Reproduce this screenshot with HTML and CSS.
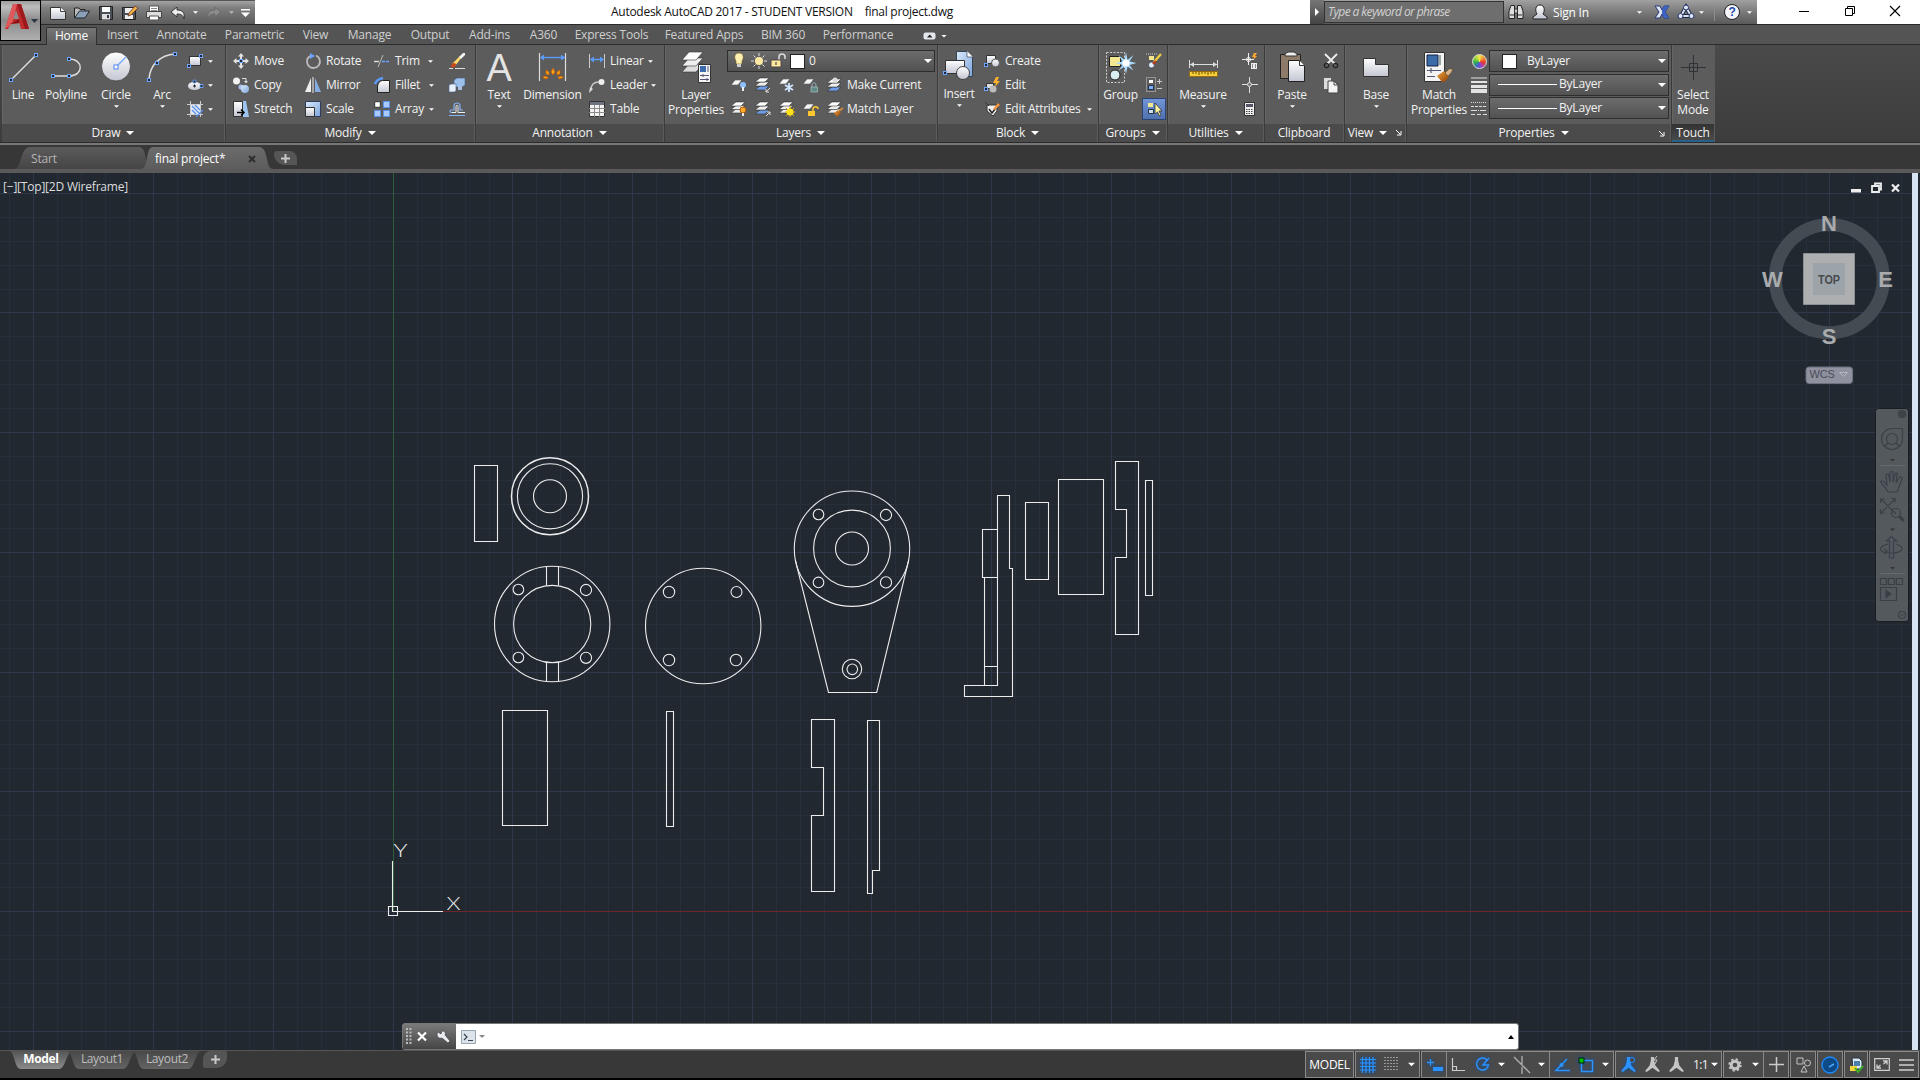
FILE: index.html
```html
<!DOCTYPE html>
<html lang="en">
<head>
<meta charset="utf-8">
<title>Autodesk AutoCAD 2017</title>
<link rel="stylesheet" href="styles.css">
</head>
<body>
<svg class="defs" width="0" height="0">
  <defs>
    <linearGradient id="w" x1="0" y1="0" x2="0" y2="1"><stop offset="0" stop-color="#fff"/><stop offset="1" stop-color="#c3c6d2"/></linearGradient>
    <linearGradient id="b" x1="0" y1="0" x2="1" y2="1"><stop offset="0" stop-color="#dcebfb"/><stop offset="1" stop-color="#7ba4dc"/></linearGradient>
    <linearGradient id="o" x1="0" y1="0" x2="1" y2="1"><stop offset="0" stop-color="#f2a53c"/><stop offset="1" stop-color="#8c3d06"/></linearGradient>
    <symbol id="dn" viewBox="0 0 8 4"><path d="M0 0h8L4 4z" fill="#fff"/></symbol>
    <symbol id="node" viewBox="0 0 4 4"><rect x=".5" y=".5" width="3" height="3" fill="#223" stroke="#6ea6ff"/></symbol>
    <symbol id="sheet" viewBox="0 0 11 5"><path d="M4 0h7L7 5H0z" fill="#f6f6f6" stroke="#333" stroke-width=".5"/></symbol>
    <symbol id="stack" viewBox="0 0 16 16"><g stroke="#333" stroke-width=".6"><path d="M5 8h9l-4 4H0z" fill="#eee"/><path d="M5 4.500h9l-4 4H0z" fill="#eee"/><path d="M5 1h9l-4 4H0z" fill="#fff"/></g></symbol>
    <symbol id="stackb" viewBox="0 0 16 16"><g stroke="#333" stroke-width=".6"><path d="M5 9h9l-4 4H0z" fill="#6d9de6"/><path d="M5 5h9l-4 4H0z" fill="#eee"/><path d="M5 1h9l-4 4H0z" fill="#fff"/></g></symbol>
    <symbol id="person" viewBox="0 0 16 16"><path d="M5 10c-2-3-2-9 3-9s5 6 3 9l4 3v2H1v-2z" fill="url(#w)" stroke="#222"/></symbol>
    <symbol id="compass" viewBox="0 0 16 16"><path d="M6.500 1h3v3l1.200 5L15 14l-1.500 1L8 11l-5.500 4L1 14l4.300-5L6.500 4z"/></symbol>
  </defs>
</svg>

<div class="app">
  <header class="titlebar">
    <div class="quick">
      <svg width="16" height="16" style="margin-left:9px"><path d="M.5 2.500h10l5 4v8H.500z" fill="url(#w)" stroke="#333"/><path d="M10.500 2.500v4h5" fill="#fff" stroke="#444"/></svg>
      <svg width="16" height="16"><path d="M.5 13V3h4.500l1 1.500h5V8" fill="#bbb" stroke="#222"/><path d="M.5 13l5-7h10l-4.500 7z" fill="#8aa0b8" stroke="#20262e"/></svg>
      <svg width="16" height="16"><path d="M1.500 1.500h13v13h-13z" fill="#4a5058" stroke="#222"/><path d="M4 2h8v5H4z" fill="#fff"/><path d="M4 9h8v5.500H4z" fill="#ddd"/><path d="M9 10h2v3H9z" fill="#334"/></svg>
      <svg width="16" height="16"><path d="M.5 2.500h13v12H.500z" fill="#4a5058" stroke="#222"/><path d="M3 3h8v5H3zM3 10h8v4H3z" fill="#eee"/><path d="M6 11l1-3 6-7 3 2-7 7z" fill="#f0b040" stroke="#633" stroke-width=".8"/></svg>
      <svg width="16" height="16"><path d="M3.500 1h9v6h-9z" fill="#fff" stroke="#555"/><path d="M.5 6.500h15v6H.500z" fill="#ddd" stroke="#444"/><path d="M3.500 11h9v4h-9z" fill="#fff" stroke="#555"/><path d="M5 3.500h6M5 5.500h6" stroke="#888"/></svg>
      <svg width="16" height="16"><path d="M1 7l6-5v3c6 0 8 3 7 9-1-4-3-5-7-5v3z" fill="#eee" stroke="#333"/></svg>
      <svg class="dn5" style="margin-left:-1px"><use href="#dn"/></svg>
      <svg width="16" height="16"><path d="M15 7L9 2v3C3 5 1 8 2 14c1-4 3-5 7-5v3z" fill="#8b8b8b" stroke="#6a6a6a"/></svg>
      <svg class="dn5" style="opacity:.5;margin-left:-1px"><use href="#dn"/></svg>
      <svg width="9" height="8" style="margin-left:-1px"><path d="M0 0h9v1.500H0zM0 3.500h9L4.500 8z" fill="#fff"/></svg>
    </div>
    <div class="apptitle"><span>Autodesk AutoCAD 2017 - STUDENT VERSION</span><span>final project.dwg</span></div>
    <div class="info">
      <div class="play"><svg width="4" height="8"><path d="M0 0l4 4-4 4z" fill="#fff"/></svg></div>
      <div class="search">Type a keyword or phrase</div>
      <svg width="16" height="16" style="margin-left:4px"><path d="M3 1.500h3.500V14.500H1V7zM9.500 1.500H13L15 7v7.500H9.500z" fill="#ddd" stroke="#222"/><path d="M6.500 5h3v4h-3zM2 11h4M10 11h4" fill="#ccc" stroke="#333"/></svg>
      <svg width="16" height="16" style="margin-left:8px"><use href="#person"/></svg>
      <span class="signin">Sign In</span>
      <svg class="dn5"><use href="#dn"/></svg>
      <svg width="16" height="14" style="margin-left:12px"><path d="M1 1h5l2 4 2-4h5l-4 6 4 6h-5L8 9l-2 4H1l4-6z" fill="#dfe6f5" stroke="#24366e"/><path d="M10 1h5l-4 6 4 6h-5L8 9V5z" fill="#3d62c4"/></svg>
      <svg width="18" height="16" style="margin-left:7px"><path d="M9 3L4 12h10z" fill="none" stroke="#1f2a4a" stroke-width="4"/><path d="M9 3L4 12h10z" fill="none" stroke="#d6deef" stroke-width="2"/><circle cx="9" cy="3.500" r="2.500" fill="#dfe6f5" stroke="#24366e"/><circle cx="3.500" cy="12" r="2.500" fill="#dfe6f5" stroke="#24366e"/><circle cx="14.500" cy="12" r="2.500" fill="#dfe6f5" stroke="#24366e"/></svg>
      <svg class="dn5" style="margin-left:4px"><use href="#dn"/></svg>
      <i class="sep"></i>
      <span class="help">?</span>
      <svg class="dn5" style="margin-left:7px"><use href="#dn"/></svg>
    </div>
    <div class="winctl">
      <svg width="12" height="12"><path d="M1 6.500h10" stroke="#000"/></svg>
      <svg width="12" height="12"><path d="M1.500 3.500h7v7h-7zM3.500 3.500v-2h7v7h-2" fill="none" stroke="#000"/></svg>
      <svg width="12" height="12"><path d="M1 1l10 10M11 1L1 11" stroke="#000" stroke-width="1.200"/></svg>
    </div>
    <div class="appbtn">
      <svg width="38" height="38"><path d="M4 28L12 3h8l8 25h-8l-1.500-6-9 1L7 28z" fill="#c22a2c"/><path d="M12 3h4l-5 20-7 5z" fill="#e0595a"/><path d="M15 9l3 9h-6z" fill="#8c8c8e"/><path d="M9 23l9-5 .500 4z" fill="#8d1216"/><path d="M20 3l8 25h-4L16 3z" fill="#9c1a1d"/><path d="M30 18h7l-3.500 4z" fill="#2a3644"/></svg>
    </div>
  </header>

  <nav class="tabs">
    <span class="on" style="width:51px">Home</span><span style="width:49px">Insert</span><span style="width:69px">Annotate</span><span style="width:77px">Parametric</span><span style="width:45px">View</span><span style="width:63px">Manage</span><span style="width:58px">Output</span><span style="width:61px">Add-ins</span><span style="width:47px">A360</span><span style="width:89px">Express Tools</span><span style="width:96px">Featured Apps</span><span style="width:62px">BIM 360</span><span style="width:88px">Performance</span>
    <svg class="cyc" width="24" height="8"><rect x=".5" y=".500" width="12" height="7" rx="2" fill="#e4e6ee"/><path d="M4 5.500h5.500L6.700 2.500z" fill="#222"/><path d="M18.500 3h5L21 5.500z" fill="#fff"/></svg>
  </nav>

  <section class="ribbon">
    <div class="panel" style="width:224px">
      <div class="body" style="grid-template-columns:42px 44px 56px 36px 32px">
        <div class="big"><svg viewBox="0 0 32 32"><path d="M4.500 28.500L29.500 3.500" stroke="#e6e6e6" stroke-width="1.300"/><use href="#node" x="2" y="27" width="4" height="4"/><use href="#node" x="27" y="2" width="4" height="4"/></svg><b>Line</b></div>
        <div class="big"><svg viewBox="0 0 32 32"><path d="M3 25h16c15 0 15-17 0-17" fill="none" stroke="#ddd" stroke-width="1.400"/><use href="#node" x="1" y="23" width="4" height="4"/><use href="#node" x="17" y="23" width="4" height="4"/><use href="#node" x="17" y="6" width="4" height="4"/></svg><b>Polyline</b></div>
        <div class="big"><svg viewBox="0 0 32 32"><circle cx="16" cy="15.500" r="14.500" fill="url(#w)" stroke="#333" stroke-width=".7"/><path d="M16 16L26 6" stroke="#6ea6ff" stroke-width="1.300"/><rect x="14" y="14" width="4" height="4" fill="#fff" stroke="#4a86f0"/></svg><b>Circle</b><svg class="dn5"><use href="#dn"/></svg></div>
        <div class="big"><svg viewBox="0 0 32 32"><path d="M3 28C4 14 14 4 29 3" fill="none" stroke="#ddd" stroke-width="1.500"/><use href="#node" x="1" y="27" width="4" height="4"/><use href="#node" x="9" y="10" width="4" height="4"/><use href="#node" x="27" y="1" width="4" height="4"/></svg><b>Arc</b><svg class="dn5"><use href="#dn"/></svg></div>
        <div class="col" style="padding-left:3px">
          <div class="it"><svg class="ic"><rect x="2.500" y="3.500" width="11" height="9" fill="url(#w)" stroke="#333"/><use href="#node" x="0" y="11" width="4" height="4"/><use href="#node" x="12" y="1" width="4" height="4"/></svg><svg class="dn5"><use href="#dn"/></svg></div>
          <div class="it"><svg class="ic"><ellipse cx="7.500" cy="9" rx="7" ry="4.500" fill="url(#w)" stroke="#333" stroke-width=".6"/><path d="M7.500 7.500v3M6 9h3" stroke="#222"/><use href="#node" x="5.500" y="2.500" width="4" height="4"/><use href="#node" x="12.500" y="7" width="4" height="4"/></svg><svg class="dn5"><use href="#dn"/></svg></div>
          <div class="it"><svg class="ic"><path d="M0 3.500h16M3.500 0v16M13.500 0v16M0 13.500h16" stroke="#ccc"/><rect x="4" y="4" width="9" height="9" fill="#dfe8f6"/><path d="M5 5l7 7M5 9l4 4M8 4l5 5M16 9L9 16" stroke="#5a8ee8" stroke-width="1.200"/></svg><svg class="dn5"><use href="#dn"/></svg></div>
        </div>
      </div>
      <div class="ttl">Draw<svg class="dn8"><use href="#dn"/></svg></div>
    </div>

    <div class="panel" style="width:250px">
      <div class="body" style="grid-template-columns:72px 69px 75px 28px;padding-left:3px">
        <div class="col">
          <div class="it"><svg class="ic"><path d="M8 0l3 3.500H9V6H7V3.500H5zM8 16l3-3.500H9V10H7v2.500H5zM0 8l3.500-3v2H6v2H3.500v2zM16 8l-3.500-3v2H10v2h2.500v2z" fill="#e2e2e2"/><use href="#node" x="6" y="6" width="4" height="4"/></svg>Move</div>
          <div class="it"><svg class="ic"><circle cx="3.500" cy="4" r="3.500" fill="#f2f2f2"/><circle cx="8" cy="10" r="2.500" fill="#a9c4ee"/><circle cx="12" cy="12" r="4" fill="url(#b)"/><path d="M9 1.500h4v3" fill="none" stroke="#ddd"/><path d="M11 4h4l-2 2.500z" fill="#ddd"/></svg>Copy</div>
          <div class="it"><svg class="ic"><path d="M10 0h3l3 16h-6z" fill="#9dc4ef"/><path d="M.5.5h9v15h-9z" fill="url(#w)" stroke="#333"/><path d="M4 11.500h6M8 8.500l3 3-3 3" stroke="#000" fill="none" stroke-width="1.500"/></svg>Stretch</div>
        </div>
        <div class="col">
          <div class="it"><svg class="ic"><path d="M5 3a6.500 6.500 0 1 0 6-.500" fill="none" stroke="#bbb" stroke-width="1.800"/><path d="M5 0l5 3-5 3z" fill="#69a4ff"/></svg>Rotate</div>
          <div class="it"><svg class="ic"><path d="M6 1v14H0z" fill="#eee"/><path d="M10 1v14h6z" fill="#86aee4"/><path d="M8 0v16" stroke="#eee"/></svg>Mirror</div>
          <div class="it"><svg class="ic"><path d="M.5.500h15v15h-15z" fill="url(#b)" stroke="#2e3c60"/><path d="M.5 6.500h9v9h-9z" fill="url(#w)" stroke="#333"/></svg>Scale</div>
        </div>
        <div class="col">
          <div class="it"><svg class="ic"><path d="M0 8.500h5" stroke="#ddd" stroke-width="1.400"/><path d="M4 14l5-12" stroke="#bbb"/><path d="M8 8.500h8" stroke="#69a4ff" stroke-width="1.400" stroke-dasharray="3 1"/></svg><span style="width:33px">Trim</span><svg class="dn5"><use href="#dn"/></svg></div>
          <div class="it"><svg class="ic"><path d="M1 7c1-3 3-5 8-6" stroke="#5b9cff" stroke-width="2.500" fill="none"/><path d="M3.500 15.500V9q1-5 5-5.500h7v12z" fill="url(#w)" stroke="#222"/></svg><span style="width:34px">Fillet</span><svg class="dn5"><use href="#dn"/></svg></div>
          <div class="it"><svg class="ic"><path d="M.7.700h5.600v5.600H.7z" fill="#fff" stroke="#333"/><path d="M9.500.5h6v6h-6zM.5 9.500h6v6h-6zM9.500 9.500h6v6h-6z" fill="#a8caff" stroke="#5b92ec"/></svg><span style="width:34px">Array</span><svg class="dn5"><use href="#dn"/></svg></div>
        </div>
        <div class="col">
          <div class="it"><svg class="ic"><path d="M3 11l8-8 2 1-7 9z" fill="#ffd86a"/><path d="M10 4l4-4h2v2l-4 4z" fill="#f7f7f7"/><path d="M2 14c0-4 3-5 5-3 0 3-2 4-5 3z" fill="#c9481a"/><path d="M0 15.500h4M6 15.500h10" stroke="#ddd"/></svg></div>
          <div class="it"><svg class="ic"><path d="M5 3l3-2h8v7l-3 2H5z" fill="#9bc0ea" stroke="#46608a" stroke-width=".6"/><path d="M0 8l2-1h5v7l-2 1H0z" fill="#e6eef8" stroke="#46608a" stroke-width=".6"/><path d="M9 9h4v4H9z" fill="#a9bfe0"/></svg></div>
          <div class="it"><svg class="ic"><path d="M0 14.500h16M4 11.500H2.500c-2 0-2-2.500 0-2.500H5V5c0-4 6-4 6 0v4h3" fill="none" stroke="#86b1f3" stroke-width="1.200"/><path d="M3 11.500h4V5.500c0-1.500 2-1.500 2 0v6h7" fill="none" stroke="#eee"/></svg></div>
        </div>
      </div>
      <div class="ttl">Modify<svg class="dn8"><use href="#dn"/></svg></div>
    </div>

    <div class="panel" style="width:189px">
      <div class="body" style="grid-template-columns:46px 61px 80px">
        <div class="big"><span class="bigA">A</span><b>Text</b><svg class="dn5"><use href="#dn"/></svg></div>
        <div class="big"><svg viewBox="0 0 32 32"><path d="M2.500 2v28M28.500 2v28" stroke="#ddd" stroke-width="1.200"/><path d="M4 6.500h24" stroke="#5b9cff" stroke-width="1.400"/><path d="M3 6.500l4-3v6zM28 6.500l-4-3v6z" fill="#5b9cff"/><g fill="#ffa91f" stroke="#c25a00" stroke-width=".8"><path d="M16 17l2 4-2 3-2-3zM9 19l3 2v3l-3-1zM23 19l-3 2v3l3-1zM7 25l4 1-1 2-4-1zM25 25l-4 1 1 2 4-1z"/></g></svg><b>Dimension</b></div>
        <div class="col" style="padding-left:2px">
          <div class="it"><svg class="ic"><path d="M.5 1v14M15.500 1v14" stroke="#ccc"/><path d="M2 6.500h12" stroke="#5b9cff" stroke-width="1.400"/><path d="M1 6.500l4-3v6zM15 6.500l-4-3v6z" fill="#5b9cff"/></svg><span style="width:38px">Linear</span><svg class="dn5"><use href="#dn"/></svg></div>
          <div class="it"><svg class="ic"><circle cx="12.500" cy="5" r="3" fill="#eee"/><path d="M2 13c0-5 3-8 8-8" fill="none" stroke="#ccc" stroke-width="1.300"/><path d="M0 16l1-6 3 2z" fill="#ddd"/></svg><span style="width:41px">Leader</span><svg class="dn5"><use href="#dn"/></svg></div>
          <div class="it"><svg class="ic"><path d="M.5.500h15v15H.500z" fill="#f2f2f2" stroke="#333"/><path d="M1 1h14v3H1z" fill="#6d7480"/><path d="M0 7.500h16M0 11.500h16M5.500 4v12M10.500 4v12" stroke="#8a8a8a"/></svg>Table</div>
        </div>
      </div>
      <div class="ttl">Annotation<svg class="dn8"><use href="#dn"/></svg></div>
    </div>

    <div class="panel" style="width:273px">
      <div class="body" style="grid-template-columns:62px 1fr">
        <div class="big"><svg viewBox="0 0 32 32"><g stroke="#333" stroke-width=".6"><path d="M9 13h14l-7 8H2z" fill="#ddd"/><path d="M9 7h14l-7 8H2z" fill="#eee"/><path d="M9 1h14l-7 8H2z" fill="#fff"/></g><path d="M18.500 13.500h12v18h-12z" fill="#f4f4f4" stroke="#333"/><path d="M20 15h6v6h-6z" fill="#3c6cae"/><path d="M28 15v6M20 24.500h9M20 28.500h9M23 23v3M27 27v3" stroke="#557"/></svg><b>Layer<br>Properties</b></div>
        <div class="rows">
          <div class="combo" style="width:208px;height:22px;margin-top:1px">
            <svg width="14" height="18" style="margin-left:4px"><path d="M7 1c5 0 5 5 3 8v3H4V9C2 6 2 1 7 1z" fill="#fff0b0" stroke="#665520" stroke-width=".6"/><path d="M5 12h4v3H5z" fill="#ccc"/></svg>
            <svg width="16" height="16" style="margin-left:5px"><circle cx="8" cy="8" r="4" fill="#ffeaa5"/><path d="M8 0v3M8 13v3M0 8h3M13 8h3M2.500 2.500l2 2M11.500 11.500l2 2M13.500 2.500l-2 2M4.500 11.500l-2 2" stroke="#ddd"/></svg>
            <svg width="16" height="16" style="margin-left:3px"><path d="M9 7V4c0-4 6-4 6 0v2" fill="none" stroke="#ddd" stroke-width="1.500"/><path d="M1 7h10v7H1z" fill="#ffe9a0" stroke="#544"/><path d="M6 9v3" stroke="#222"/></svg>
            <i class="sw"></i><span>0</span><svg class="dn8 end"><use href="#dn"/></svg>
          </div>
          <div class="lrow">
            <svg class="ic"><use href="#sheet" x="0" y="3" width="11" height="5"/><circle cx="12" cy="8" r="3" fill="#8ec0ff"/><path d="M11 10h2v4h-2z" fill="#eee"/></svg>
            <svg class="ic"><use href="#stackb" width="16" height="16"/><path d="M15 11l-4 4m0-3v3h3" stroke="#ddd" fill="none"/></svg>
            <svg class="ic"><use href="#sheet" x="0" y="2" width="11" height="5"/><path d="M10 6v9M6 8l8 5M14 8l-8 5" stroke="#cfe4ff" stroke-width="1.800"/></svg>
            <svg class="ic"><use href="#sheet" x="0" y="2" width="11" height="5"/><path d="M9 10V8c0-3 4-3 4 0v2" fill="none" stroke="#9ab"/><path d="M8 10h6.500v5H8z" fill="#5f8a86" stroke="#bcc" stroke-width=".6"/></svg>
            <svg class="ic"><use href="#stackb" y="1" width="16" height="16"/><circle cx="8" cy="3" r="2.500" fill="#ddd"/></svg>
            <span>Make Current</span>
          </div>
          <div class="lrow">
            <svg class="ic"><use href="#stack" width="16" height="16"/><circle cx="12" cy="9" r="3" fill="#ffab2e" stroke="#b35500"/><path d="M11 12h2v3h-2z" fill="#eee"/></svg>
            <svg class="ic"><use href="#stackb" width="16" height="16"/><path d="M11 15l4-4m-3 0h3v3" stroke="#ddd" fill="none"/></svg>
            <svg class="ic"><use href="#stack" width="16" height="16"/><path d="M11 5v11M6 11h10M7 7l8 8M15 7l-8 8" stroke="#e0a800"/><circle cx="11" cy="11" r="3.500" fill="#ffe21a"/></svg>
            <svg class="ic"><use href="#sheet" x="0" y="3" width="11" height="5"/><path d="M10 10V8c0-3 5-3 5 0" fill="none" stroke="#ffc72e" stroke-width="1.500"/><path d="M5 10h7v5H5z" fill="#ffc72e"/></svg>
            <svg class="ic"><use href="#stack" width="16" height="16"/><path d="M7 12l4-3 3 3-4 4z" fill="url(#o)"/><path d="M12 10l4-3" stroke="#d08a3a" stroke-width="2"/></svg>
            <span>Match Layer</span>
          </div>
        </div>
      </div>
      <div class="ttl">Layers<svg class="dn8"><use href="#dn"/></svg></div>
    </div>

    <div class="panel" style="width:161px">
      <div class="body" style="grid-template-columns:42px 1fr">
        <div class="big up"><svg viewBox="0 0 32 32"><path d="M13.500 1.500h11l5 5v20h-16z" fill="url(#b)" stroke="#345"/><path d="M24 1v6h6" fill="#fff" stroke="#345" stroke-width=".7"/><path d="M2.500 10.500h19v13h-19z" fill="url(#w)" stroke="#333"/><circle cx="20" cy="23" r="6.500" fill="url(#w)" stroke="#444"/><use href="#node" x="0" y="21" width="4" height="4"/></svg><b>Insert</b><svg class="dn5"><use href="#dn"/></svg></div>
        <div class="col">
          <div class="it"><svg class="ic"><path d="M2.500 2.500h9v8h-9z" fill="url(#w)" stroke="#333"/><circle cx="11.500" cy="10" r="4" fill="url(#w)" stroke="#555"/><use href="#node" x="0" y="10" width="4" height="4"/></svg>Create</div>
          <div class="it"><svg class="ic"><path d="M2.500 6.500h7v5h-7z" fill="#ddd" stroke="#333"/><circle cx="9" cy="12" r="3.500" fill="#bbb"/><path d="M12 0l-3 6h3l-1 4 5-6h-3l2-4z" fill="#ffb12e"/><use href="#node" x="0" y="10" width="4" height="4"/></svg>Edit</div>
          <div class="it"><svg class="ic"><path d="M1 1l4 4M3 4h10v6l-4 5-6-5z" fill="#eee" stroke="#333"/><path d="M5 8l3 4 7-9" fill="none" stroke="#222" stroke-width="1.500"/><path d="M9 8l5-6 2 2-5 5z" fill="#f2923a"/></svg><span style="width:82px;letter-spacing:-.3px">Edit Attributes</span><svg class="dn5"><use href="#dn"/></svg></div>
        </div>
      </div>
      <div class="ttl">Block<svg class="dn8"><use href="#dn"/></svg></div>
    </div>

    <div class="panel" style="width:69px">
      <div class="body" style="grid-template-columns:43px 24px">
        <div class="big"><svg viewBox="0 0 32 32"><rect x="1.500" y="1.500" width="18" height="30" fill="none" stroke="#ccc" stroke-dasharray="2 1.500"/><path d="M4.500 5.500h11v10h-11z" fill="#f2e690" stroke="#222"/><circle cx="10" cy="24" r="5" fill="#d9eeee" stroke="#222"/><path d="M21 1l1.500 8 6-5-4 6.500 7 1.500-7 2 4 5.500-6-4L21 23l-1.500-7.500-6 4 4-5.500-7-2 7-1.500-4-6.500 6 5z" fill="#a9dcff"/><circle cx="21" cy="12" r="3.500" fill="#fff"/></svg><b>Group</b></div>
        <div class="col">
          <div class="it"><svg class="ic"><path d="M0 1h12" stroke="#ccc" stroke-dasharray="1 1"/><path d="M3 3h5v4H3z" fill="#f2e690"/><circle cx="5.500" cy="12" r="3" fill="#def" stroke="#222" stroke-width=".6"/><path d="M8 9l7-8" stroke="#f0d040" stroke-width="2.200"/><path d="M7 11l3-3" stroke="#c3361c" stroke-width="2"/></svg></div>
          <div class="it"><svg class="ic"><rect x=".5" y=".5" width="9" height="14" fill="none" stroke="#ccc" stroke-dasharray="1 1"/><path d="M3 3h4v3H3z" fill="#fff"/><path d="M2.500 8.500h5v4h-5z" fill="#7fb0ff" stroke="#234"/><path d="M11 4.500h5M13.500 2v5M11 11.500h5" stroke="#ccc"/></svg></div>
          <div class="it hot"><svg class="ic"><path d="M2 2h5v4H2z" fill="#f2e690"/><path d="M2.500 8.500h5v4h-5z" fill="#cde" stroke="#234"/><path d="M9 2v11l2.500-2 2 4 1.500-1-2-4h3z" fill="#fff3a0" stroke="#222" stroke-width=".7"/></svg></div>
        </div>
      </div>
      <div class="ttl">Groups<svg class="dn8"><use href="#dn"/></svg></div>
    </div>

    <div class="panel" style="width:97px">
      <div class="body" style="grid-template-columns:70px 24px">
        <div class="big"><svg viewBox="0 0 32 32"><path d="M2.500 9v8M30.500 9v8M3 13.500h27" stroke="#ddd"/><path d="M3 13.500l4-2.500v5zM30 13.500l-4-2.500v5z" fill="#ddd"/><path d="M2.500 20.500h28v5h-28z" fill="#f5cf3c" stroke="#9a6a10"/><path d="M6 21v2M9 21v2M12 21v3M15 21v2M18 21v2M21 21v3M24 21v2M27 21v2" stroke="#6d4a00"/></svg><b>Measure</b><svg class="dn5"><use href="#dn"/></svg></div>
        <div class="col">
          <div class="it"><svg class="ic"><path d="M0 6.500h12M6.500 0v12" stroke="#eee"/><circle cx="6.500" cy="6.500" r="2" fill="none" stroke="#eee"/><path d="M12 0l-2 4h2l-1 3 4-4h-2l2-3z" fill="#ffa62e"/><path d="M9 10h6v6H9z" fill="#eee"/><path d="M10 12h1M13 12h1M10 14h1M13 14h1" stroke="#222"/></svg></div>
          <div class="it"><svg class="ic"><path d="M0 7.500h16M7.500 0v16" stroke="#ddd"/><circle cx="7.500" cy="7.500" r="2" fill="#777" stroke="#ddd"/></svg></div>
          <div class="it"><svg class="ic"><path d="M2.500 1.500h10v13h-10z" fill="#eee" stroke="#333"/><path d="M4 3h7v3H4z" fill="#556"/><path d="M4 8.500h7M4 10.500h7M4 12.500h7" stroke="#444" stroke-dasharray="1.500 1"/></svg></div>
        </div>
      </div>
      <div class="ttl">Utilities<svg class="dn8"><use href="#dn"/></svg></div>
    </div>

    <div class="panel" style="width:80px">
      <div class="body" style="grid-template-columns:54px 24px">
        <div class="big"><svg viewBox="0 0 32 32"><path d="M4.500 3.500h20v24h-20z" fill="#8d7a68" stroke="#222"/><path d="M9 3l3-2h6l3 2v2H9z" fill="#eee" stroke="#333"/><path d="M12.500 9.500h11l5 5v16h-16z" fill="url(#w)" stroke="#222"/><path d="M23.500 9.500v5h5" fill="#fff" stroke="#333"/></svg><b>Paste</b><svg class="dn5"><use href="#dn"/></svg></div>
        <div class="col">
          <div class="it"><svg class="ic"><path d="M2 1l10 10M14 1L4 11" stroke="#eee" stroke-width="1.800"/><circle cx="3.500" cy="12.500" r="2.200" fill="none" stroke="#222" stroke-width="1.200"/><circle cx="12.500" cy="12.500" r="2.200" fill="none" stroke="#222" stroke-width="1.200"/></svg></div>
          <div class="it"><svg class="ic"><path d="M1 1h7v11H1z" fill="#ddd"/><path d="M5 4h6l4 4v8H5z" fill="#f4f4f4" stroke="#444"/><path d="M11 4v4h4" fill="none" stroke="#444"/></svg></div>
        </div>
      </div>
      <div class="ttl">Clipboard</div>
    </div>

    <div class="panel" style="width:62px">
      <div class="body" style="grid-template-columns:62px">
        <div class="big"><svg viewBox="0 0 32 32"><path d="M3.500 7.500h12v6h13v12h-25z" fill="url(#w)" stroke="#333"/></svg><b>Base</b><svg class="dn5"><use href="#dn"/></svg></div>
      </div>
      <div class="ttl">View<svg class="dn8"><use href="#dn"/></svg><svg class="ln"><path d="M0 0l4 4M5 1v4H1" stroke="#fff" fill="none"/></svg></div>
    </div>

    <div class="panel" style="width:265px">
      <div class="body" style="grid-template-columns:60px 24px 1fr;padding-left:1px">
        <div class="big" style="padding-left:2px"><svg viewBox="0 0 32 32"><path d="M1.500 1.500h20v29h-20z" fill="#f4f4f4" stroke="#333"/><path d="M4 4h11v11H4z" fill="#3c6ca8" stroke="#124"/><path d="M17 4v10" stroke="#9aa" stroke-width="2"/><path d="M4 19.500h14M8 17v5M4 25.500h8" stroke="#557" stroke-width="1.200"/><path d="M14 25l7-5 5 5c-2 5-5 6-7 6z" fill="url(#o)"/><path d="M22 22l4-4h4l-2 4-3 3z" fill="#d9b48a" stroke="#642" stroke-width=".6"/></svg><b>Match<br>Properties</b></div>
        <div class="col">
          <div class="it"><i class="wheel"></i></div>
          <div class="it"><svg class="ic" style="margin-left:3px"><path d="M0 1h16" stroke="#e2e2e2"/><path d="M0 5h16" stroke="#e2e2e2" stroke-width="2"/><path d="M0 9.500h16" stroke="#e2e2e2" stroke-width="3"/><path d="M0 14h16" stroke="#e2e2e2" stroke-width="4"/></svg></div>
          <div class="it"><svg class="ic" style="margin-left:3px"><path d="M0 1.500h16" stroke="#ddd" stroke-dasharray="1 1"/><path d="M0 5.500h16" stroke="#ddd" stroke-dasharray="3 1"/><path d="M0 9.500h16" stroke="#ddd" stroke-dasharray="6 1 1 1"/><path d="M0 13.500h16" stroke="#ddd" stroke-dasharray="4 2"/></svg></div>
        </div>
        <div class="props">
          <div class="combo"><i class="sw" style="margin-left:12px"></i><span style="margin-left:6px">ByLayer</span><svg class="dn8 end"><use href="#dn"/></svg></div>
          <div class="combo"><i class="ls"></i><span>ByLayer</span><svg class="dn8 end"><use href="#dn"/></svg></div>
          <div class="combo"><i class="ls"></i><span>ByLayer</span><svg class="dn8 end"><use href="#dn"/></svg></div>
        </div>
      </div>
      <div class="ttl" style="padding-right:10px">Properties<svg class="dn8"><use href="#dn"/></svg><svg class="ln far"><path d="M0 0l4 4M5 1v4H1" stroke="#fff" fill="none"/></svg></div>
    </div>

    <div class="panel touch" style="width:43px">
      <div class="body" style="grid-template-columns:42px">
        <div class="big"><svg viewBox="0 0 32 32"><path d="M16.500 4v25M4 16.500h25M12.500 12.500h8v8h-8z" fill="none" stroke="#2f3338"/></svg><b>Select<br>Mode</b></div>
      </div>
      <div class="ttl">Touch</div>
    </div>
    <div class="rest"></div>
  </section>

  <nav class="files">
    <div class="ft start">Start</div>
    <div class="ft cur">final project*<svg width="8" height="8"><path d="M1 1l6 6M7 1L1 7" stroke="#2b2b2b" stroke-width="1.800"/></svg></div>
    <div class="ft add"><svg width="9" height="9"><path d="M4.500 0v9M0 4.500h9" stroke="#c8c8c8" stroke-width="2"/></svg></div>
  </nav>

  <main class="view">
    <svg class="model" width="1912" height="877" viewBox="0 173 1912 877">
      <defs>
        <path id="gc" d="M24.500 173v877M48.500 173v877M72.500 173v877M96.500 173v877"/>
        <path id="gr" d="M0 24.500h1912M0 48.500h1912M0 72.500h1912M0 96.500h1912"/>
      </defs>
      <g stroke="#272f3a">
        <use href="#gc" x="-87"/><use href="#gc" x="33"/><use href="#gc" x="153"/><use href="#gc" x="273"/><use href="#gc" x="393"/><use href="#gc" x="512"/><use href="#gc" x="632"/><use href="#gc" x="752"/><use href="#gc" x="871"/><use href="#gc" x="991"/><use href="#gc" x="1111"/><use href="#gc" x="1231"/><use href="#gc" x="1350"/><use href="#gc" x="1470"/><use href="#gc" x="1590"/><use href="#gc" x="1710"/><use href="#gc" x="1829"/>
        <use href="#gr" y="193"/><use href="#gr" y="312"/><use href="#gr" y="432"/><use href="#gr" y="552"/><use href="#gr" y="672"/><use href="#gr" y="791"/><use href="#gr" y="911"/>
      </g>
      <path stroke="#2f384a" d="M33.500 173v877M153.500 173v877M273.500 173v877M393.500 911v139M512.500 173v877M632.500 173v877M752.500 173v877M871.500 173v877M991.500 173v877M1111.500 173v877M1231.500 173v877M1350.500 173v877M1470.500 173v877M1590.500 173v877M1710.500 173v877M1829.500 173v877M0 193.500h1912M0 312.500h1912M0 432.500h1912M0 552.500h1912M0 672.500h1912M0 791.500h1912M0 911.500h393M0 1031.500h1912"/>
      <path d="M393.500 173v738" stroke="#2c5f35"/>
      <path d="M443 911.500h1469" stroke="#6e262c"/>
      <g fill="none" stroke="#ececec" stroke-width="1.100">
        <path d="M474.500 465.500h23v76h-23z"/>
        <circle cx="550" cy="496.300" r="38.500" stroke-width="1.500"/><circle cx="550" cy="496.300" r="32.600"/><circle cx="550" cy="496.300" r="16.500"/>
        <circle cx="552.200" cy="624" r="57.700"/><circle cx="552.200" cy="624" r="38.600"/>
        <path d="M546.500 566.500v19M558.500 566.500v19M546.500 661.500v19.500M558.500 661.500v19.500"/>
        <circle cx="518.400" cy="589.500" r="5.300"/><circle cx="586" cy="590" r="5.600"/><circle cx="518.400" cy="657.500" r="5.300"/><circle cx="586" cy="657.800" r="5.600"/>
        <circle cx="703.200" cy="626" r="57.700"/><circle cx="669" cy="592" r="5.700"/><circle cx="736.500" cy="592" r="5.500"/><circle cx="669" cy="660" r="5.700"/><circle cx="736" cy="660" r="5.700"/>
        <path d="M502.500 710.500h45v115h-45zM666.500 711.500h7v115h-7z"/>
        <circle cx="852" cy="548.700" r="57.700"/><circle cx="852" cy="548.500" r="38.400"/><circle cx="852" cy="548.500" r="16.500"/>
        <circle cx="818.500" cy="514.500" r="5.300"/><circle cx="886" cy="515" r="5.600"/><circle cx="818.500" cy="582.400" r="5.300"/><circle cx="886" cy="582.400" r="5.600"/>
        <path d="M795.300 560L828.500 692.500h48.200L908.700 560"/>
        <circle cx="852" cy="669" r="9.700"/><circle cx="852.300" cy="669.300" r="5.300"/>
        <path d="M997.500 685.500v-190h12v73h3v128h-48v-11zM997.500 529.500h-15v48h15M984.500 577.500v108M984.500 666.500h13"/>
        <path d="M1025.500 502.500h23v77h-23zM1058.500 479.500h45v115h-45zM1115.500 461.500h23v173h-23v-77h11v-48h-11zM1145.500 480.500h7v115h-7z"/>
        <path d="M811.500 719.500h23v172h-23v-76h12v-48h-12zM867.500 720.500h12v150h-7v23h-5z"/>
        <path d="M392.500 861v50.500h50.500M388.500 906.500h9v9h-9z"/>
      </g>
      <g class="axis"><text x="393.500" y="857" textLength="14" lengthAdjust="spacingAndGlyphs">Y</text><text x="446.500" y="910" textLength="14" lengthAdjust="spacingAndGlyphs">X</text></g>
      <text class="vlabel" x="3" y="191" textLength="125">[−][Top][2D Wireframe]</text>
      <g><path d="M1851 189h10v3.500h-10z" fill="#eee"/><path d="M1872 186h7v6h-7zM1875 186v-2.500h6v6h-2" fill="none" stroke="#eee" stroke-width="1.800"/><path d="M1892 184.500l7 7M1899 184.500l-7 7" stroke="#eee" stroke-width="2.200"/></g>
      <circle cx="1829.300" cy="278.700" r="54" fill="none" stroke="#454b53" stroke-width="13"/>
      <path d="M1803.500 253.500h51v51h-51z" fill="#adafb1" stroke="#8c9092"/><path d="M1813 263h32v32h-32z" fill="#9da4a9"/>
      <text class="top" x="1829" y="283.500" textLength="22" lengthAdjust="spacingAndGlyphs">TOP</text>
      <g class="nesw"><text x="1829" y="230.500">N</text><text x="1829" y="343.500">S</text><text x="1772.500" y="287">W</text><text x="1885.500" y="287">E</text></g>
      <rect x="1806" y="367" width="46.500" height="16.500" rx="3" fill="#8f919f" stroke="#6d7080"/>
      <text class="wcs" x="1809.500" y="377.700">WCS</text><path d="M1839.500 372.500h8l-4 4z" fill="none" stroke="#b6b8c2"/>
      <rect x="1875.500" y="408.500" width="33" height="213" rx="3" fill="#54595e" stroke="#1a1e23"/>
      <g fill="none" stroke="#3a4048" stroke-width="1.200">
        <circle cx="1902" cy="414" r="3.500" fill="#43484d"/><path d="M1900.500 412.500l3 3M1903.500 412.500l-3 3M1900.500 615h3"/><circle cx="1902" cy="615" r="3.500"/>
        <path d="M1892 428.500h10.500V439a10.500 10.500 0 1 1-10.500-10.500z"/><circle cx="1892" cy="439" r="5.500"/><path d="M1888 443l-3 3M1896 443l3 3"/>
        <path d="M1888 492l-4-6c-4-4-4-5-2-5 2 0 4 3 5 4l-1-9c0-3 3-3 3 0l1 6v-9c0-2 3-2 3 0v9l2-8c1-2 3-1 2 1l-1 8 3-5c1-2 4-1 3 1l-5 13z"/>
        <path d="M1881 499l15 15M1895 499l-15 15M1880.500 503v-4h4M1891 498.500h4v4M1880.500 509v4h4"/><circle cx="1896" cy="513" r="4.500"/><path d="M1899 516l5 5" stroke-width="3"/>
        <path d="M1889.500 558v-17h-3l5-4.500 5 4.500h-3v17zM1888 544c-12 3-9 9 3 9s15-6 5-9M1884 549l3 2-3 3"/>
        <path d="M1880.500 578.500h6v6h-6zM1888.500 578.500h6v6h-6zM1896.500 578.500h6v6h-6zM1880.500 587.500h16v13h-16z"/><path d="M1886 590.500v7l5-3.500z" fill="#3a4048"/>
        <path d="M1890 459h5l-2.500 2.500zM1890 528.500h5l-2.500 2.500zM1890 567h5l-2.500 2.500z" fill="#333" stroke="none"/><path d="M1880 465.500h25M1880 573.500h25" stroke="#656a70"/>
      </g>
    </svg>
    <div class="edge"></div>
    <div class="cmd">
      <div class="cl">
        <svg width="6" height="17"><path d="M1 0v17M4.500 0v17" stroke="#bbb" stroke-width="2" stroke-dasharray="2 1.500"/></svg>
        <svg width="10" height="9"><path d="M1 .500l8 8M9 .500l-8 8" stroke="#fff" stroke-width="2.200"/></svg>
        <svg width="14" height="14" style="margin-left:5px"><path d="M1 2l3 2 1-3c3 0 4 2 3 4l5 6-2 2-6-5c-3 1-5-1-5-4z" fill="#e8eaf0" stroke="#333" stroke-width=".6"/></svg>
      </div>
      <svg width="15" height="14" style="margin-left:5px"><path d="M.5.500h14v13H.5z" fill="#dde3ea" stroke="#9aa5b2"/><path d="M3 4l3 3-3 3M7 10.500h5" fill="none" stroke="#345" stroke-width="1.200"/></svg>
      <svg width="6" height="4" style="margin-left:3px"><path d="M0 0h6L3 3z" fill="#888"/></svg>
      <svg width="6" height="4" style="margin-left:auto;margin-right:4px"><path d="M0 4h6L3 0z" fill="#000"/></svg>
    </div>
  </main>

  <footer class="status">
    <div class="lay"><span class="m">Model</span><span>Layout1</span><span>Layout2</span><span class="p"><svg width="9" height="9"><path d="M4.500 0v9M0 4.500h9" stroke="#c8c8c8" stroke-width="2"/></svg></span></div>
    <div class="sb">
      <div style="width:49px" class="mt">MODEL</div>
      <div style="width:65px"><svg class="glow" width="16" height="16"><path d="M2.500 0v16M6 0v16M9.500 0v16M13 0v16M0 2.500h16M0 6h16M0 9.500h16M0 13h16" stroke="#2a93ff" stroke-width="1.200"/></svg><svg width="15" height="15" style="margin-left:8px"><path d="M1 0v15M4 0v15M7 0v15M10 0v15M13 0v15" stroke="#ccc" stroke-dasharray="1 2" stroke-width="1.200"/></svg><svg class="dn6" style="margin-left:9px"><use href="#dn"/></svg></div>
      <div class="join" style="width:26px"><svg class="glow" width="17" height="16"><path d="M1 5.500h7M4.500 2v7" stroke="#2a93ff" stroke-width="1.300"/><rect x="7" y="10" width="10" height="4" fill="#2a93ff"/></svg></div>
      <div class="join" style="width:104px"><svg width="14" height="14"><path d="M1.500 0v12.500H14M1.500 8.500h4v4" fill="none" stroke="#ccc" stroke-width="1.200"/></svg><svg class="glow" width="16" height="15" style="margin-left:10px"><path d="M12 3a6 6 0 1 0 1.500 5H8L14 1" fill="none" stroke="#2a93ff" stroke-width="1.500"/></svg><svg class="dn6" style="margin-left:7px"><use href="#dn"/></svg><svg width="18" height="18" style="margin-left:8px"><path d="M1 1l16 16M9 0v8M9 11v7" stroke="#b0b0b0" stroke-width="1.300"/></svg><svg class="dn6" style="margin-left:7px"><use href="#dn"/></svg></div>
      <div style="width:65px"><svg class="glow" width="16" height="14"><path d="M16 12.500H2L13 1" fill="none" stroke="#2a93ff" stroke-width="1.500"/><circle cx="7.500" cy="7" r="2" fill="#2a93ff"/></svg><svg width="16" height="16" class="glow" style="margin-left:8px"><path d="M3.500 3.500h11v11h-11z" fill="none" stroke="#2a93ff" stroke-width="1.500"/><path d="M1 1h5v5H1z" fill="#0b0" stroke="#020"/></svg><svg class="dn6" style="margin-left:8px"><use href="#dn"/></svg></div>
      <div style="width:107px;justify-content:flex-start;padding-left:4px"><svg class="glow" width="17" height="17" fill="#2a93ff"><use href="#compass"/><circle cx="12" cy="4" r="2.500" fill="#444" stroke="#2a93ff"/></svg><svg width="17" height="17" fill="#c4c4c4" style="margin-left:7px"><use href="#compass"/><path d="M13 0l-3 4h3l-2 4" stroke="#c4c4c4" fill="none"/></svg><svg width="17" height="17" fill="#c4c4c4" style="margin-left:7px"><use href="#compass"/></svg><span class="one">1:1</span><svg class="dn6" style="margin-left:3px"><use href="#dn"/></svg></div>
      <div class="join" style="width:41px"><svg width="14" height="14"><circle cx="7" cy="7" r="3.800" fill="none" stroke="#c4c4c4" stroke-width="3"/><circle cx="7" cy="7" r="5.800" fill="none" stroke="#c4c4c4" stroke-width="1.800" stroke-dasharray="2.300 2.250"/></svg><svg class="dn6" style="margin-left:10px"><use href="#dn"/></svg></div>
      <div style="width:26px"><svg width="15" height="15"><path d="M7.500 0v15M0 7.500h15" stroke="#ccc" stroke-width="1.500"/></svg></div>
      <div style="width:26px"><svg width="15" height="16"><path d="M1 1h6v6H1zM5 15l3-6 3 6z" fill="none" stroke="#c4c4c4"/><circle cx="11.500" cy="6" r="3" fill="none" stroke="#c4c4c4"/></svg></div>
      <div style="width:26px"><svg width="18" height="18"><circle cx="9" cy="9" r="8" fill="#0d4a86" stroke="#1d8cff" stroke-width="1.300"/><path d="M8 11l5-3" stroke="#4aa4ff" stroke-width="1.500"/></svg></div>
      <div style="width:24px"><svg width="15" height="16"><path d="M3 1h7l3 3v8H4z" fill="#dce8f4" stroke="#234"/><path d="M5 4h6v5H5z" fill="#4c7fae"/><path d="M1 9h7v5H1z" fill="#f2d53c"/><path d="M6 11l3 4 5-6" fill="none" stroke="#3cae28" stroke-width="2"/></svg></div>
      <div style="width:50px"><svg width="16" height="13"><path d="M.7.700h14.600v11.600H.7z" fill="none" stroke="#d0d0d0" stroke-width="1.200"/><path d="M3 10l3.500-3M3 6.500V10h4M13 3L9.500 6M9 3h4v3.500" fill="none" stroke="#d0d0d0" stroke-width="1.300"/></svg><svg width="15" height="12" style="margin-left:9px"><path d="M0 1h15M0 6h15M0 11h15" stroke="#d0d0d0" stroke-width="1.700"/></svg></div>
    </div>
  </footer>
</div>
</body>
</html>
```

FILE: styles.css
```css
* { box-sizing: border-box; }
body { margin: 0; background: #000; font: 12px/15px "Open Sans", "Noto Sans", sans-serif; letter-spacing: -0.2px; color: #f2f2f2; overflow: hidden; }
svg { display: block; flex: none; overflow: visible; }
.defs { position: absolute; }
.app { width: 1920px; height: 1078px; display: flex; flex-direction: column; background: #383838; }
span, b { white-space: nowrap; font-weight: 400; }
.dn5 { width: 5px; height: 3px; }
.dn6 { width: 7px; height: 5px; }
.dn8 { width: 8px; height: 4px; }

.titlebar { position: relative; height: 24px; display: flex; background: #fff; color: #111; }
.quick { width: 255px; padding-left: 41px; display: flex; align-items: center; gap: 8px; background: linear-gradient(#a4a4a4, #7e7e7e 30%, #5c5c5c); border-top: 1px solid #555; }
.appbtn { position: absolute; left: 0; top: 0; width: 41px; height: 41px; border: 1px solid #000; background: linear-gradient(#9c9c9c, #bdbdbd 15%, #8a8a8a 50%, #b0b0b0); z-index: 2; }
.apptitle { flex: 1; display: flex; gap: 12px; padding-left: 356px; line-height: 24px; letter-spacing: -0.270px; }
.info { width: 447px; display: flex; align-items: center; background: linear-gradient(#a0a0a0, #7a7a7a 50%, #5a5a5a); color: #fff; }
.play { width: 14px; height: 24px; display: flex; align-items: center; justify-content: center; background: linear-gradient(#777, #444); }
.search { width: 180px; height: 22px; border: 1px solid #333; background: #6e6e6e; color: #d2d2d2; font-style: italic; line-height: 20px; padding-left: 3px; white-space: nowrap; letter-spacing: -0.600px; }
.signin { width: 85px; margin-left: 4px; padding-left: 1px; }
.sep { width: 1px; height: 18px; background: #8d8d8d; margin: 0 9px 0 10px; }
.help { width: 16px; height: 16px; border-radius: 50%; background: #f4f6fa; border: 1px solid #222; color: #1d4cae; font: bold 12px/14px "Liberation Sans", sans-serif; text-align: center; }
.winctl { width: 163px; display: flex; align-items: center; justify-content: space-between; padding: 0 19px 0 41px; height: 22px; }

.tabs { height: 21px; display: flex; align-items: stretch; padding-left: 46px; background: #545454; border-top: 1px solid #2a2a2a; border-bottom: 1px solid #2c2c2c; }
.tabs span { text-align: center; line-height: 20px; color: #cfcfcf; }
.tabs .on { margin-top: 2px; margin-right: 1px; height: 18px; line-height: 15px; color: #fff; background: linear-gradient(#757575, #5c5c5c); border: 1px solid #303030; border-bottom: 0; border-radius: 2px 2px 0 0; }
.cyc { align-self: center; margin-left: 21px; margin-top: 2px; }

.ribbon { height: 100px; display: flex; padding-left: 2px; background: linear-gradient(#4a4a4a, #3c3c3c); border-bottom: 2px solid #777; box-shadow: inset 0 -1px #2b2b2b; }
.panel { height: 97px; display: flex; flex-direction: column; background: #5c5c5c; border-right: 1px solid #3b3b3b; box-shadow: inset 1px 0 #666; }
.body { height: 79px; display: grid; grid-template-rows: 79px; }
.big { display: flex; flex-direction: column; align-items: center; padding-top: 6px; text-align: center; }
.big > svg:first-child { width: 32px; height: 32px; }
.big b { margin-top: 4px; }
.big .dn5 { margin-top: 3px; }
.big.up { padding-top: 5px; }
.bigA { height: 32px; font: 38px/34px "Liberation Sans", sans-serif; color: #e4e4e4; }
.col { padding-top: 4px; }
.it { height: 24px; display: flex; align-items: center; padding-bottom: 2px; }
.it > svg, .it > i { margin-top: 2px; }
.ic { width: 16px; height: 16px; margin: 0 5px 0 4px; }
.hot { background: linear-gradient(#7397d8, #4d6fae); box-shadow: inset 0 0 0 1px #2c4475; height: 22px; margin-top: 1px; }
.ttl { height: 18px; display: flex; align-items: center; justify-content: center; gap: 6px; background: #4b4b4b; position: relative; margin-right: 1px; padding-bottom: 2px; }
.ttl svg { margin-top: 2px; }
.ln { width: 6px; height: 6px; margin-left: 3px; }
.ln.far { position: absolute; right: 5px; top: 5px; }
.rows { padding-top: 4px; }
.combo { display: flex; align-items: center; height: 22px; border: 1px solid #2e2e2e; background: linear-gradient(#6c6c6c, #525252); }
.combo span { margin-top: -2px; }
.combo .end { margin-left: auto; margin-right: 2px; }
.sw { width: 15px; height: 15px; background: #fff; border: 1px solid #222; margin: 0 4px 0 4px; }
.ls { width: 59px; height: 1px; background: #fff; margin: 0 2px 0 8px; }
.lrow { height: 24px; display: flex; align-items: center; }
.lrow span { margin-top: -2px; }
.lrow:nth-child(2) { margin-top: 1px; }
.lrow .ic { margin: 0 4px 0 4px; }
.props { padding: 5px 2px 0 0; margin-left: -3px; display: grid; grid-template-rows: 22px 22px 22px; row-gap: 1.500px; }
.wheel { width: 15px; height: 15px; margin-left: 4px; border-radius: 50%; border: 1px solid #ddd; background: conic-gradient(#f5e64a, #f08a2a, #e8382f, #a040c0, #3f62d6, #2fb04a, #9ad63c, #f5e64a); }
.touch { border-right: 0; }
.touch .ttl { background: linear-gradient(#333, #4a4a4a); border-bottom: 2px solid #25618a; padding-bottom: 0; }

.files { height: 28px; display: flex; background: #373737; border-bottom: 4px solid #5a5a5a; padding: 2px 0 0 14px; }
.ft { height: 22px; line-height: 22px; display: flex; align-items: center; padding-top: 2px; }
.start { width: 138px; padding-left: 17px; color: #b4b4b4; background: linear-gradient(#5b5b5b, #454545); clip-path: path("M0 22 C8 22 6 0 16 0 H125 C134 0 130 22 138 22 Z"); }
.cur { width: 132px; margin-left: -11px; padding-left: 14px; gap: 23px; color: #fff; background: linear-gradient(#6c6c6c, #5c5c5c); clip-path: path("M0 22 C8 22 4 0 12 0 H118 C128 0 124 22 132 22 Z"); }
.add { width: 23px; height: 14px; margin: 4px 0 0 1px; padding-top: 0; justify-content: center; background: #565656; border-radius: 3px 8px 0 12px; }

.view { position: relative; height: 877px; display: flex; background: #212830; }
.model { overflow: hidden; }
.edge { width: 6px; background: #d6e3f2; }
.axis { font: 300 17.500px "Lato", sans-serif; fill: #eee; letter-spacing: 0; }
.vlabel { font-size: 12px; fill: #dcdcdc; }
.top { font: bold 13.500px "Liberation Sans", sans-serif; fill: #474c51; text-anchor: middle; letter-spacing: 0; }
.nesw { font: bold 22px "Liberation Sans", sans-serif; fill: #a9abad; text-anchor: middle; letter-spacing: 0; }
.wcs { font: 11px "Liberation Sans", sans-serif; fill: #4a4c58; }
.cmd { position: absolute; left: 402px; top: 850px; width: 1117px; height: 27px; display: flex; align-items: center; background: #fff; border: 1px solid #777; border-radius: 3px; }
.cl { width: 53px; height: 25px; display: flex; align-items: center; gap: 5px; padding-left: 3px; background: linear-gradient(#7a7a7a, #454545); }

.status { height: 28px; display: flex; justify-content: space-between; border-top: 1px solid #555; }
.lay { display: flex; padding-left: 9px; }
.lay span { height: 18px; line-height: 16px; width: 70px; margin-right: -5px; text-align: center; color: #bdbdbd; letter-spacing: -0.350px; background: linear-gradient(#484848, #646464); clip-path: path("M0 0 C6 0 5 18 12 18 H56 C63 18 63 0 70 0 Z"); }
.lay .m { width: 64px; margin-right: -6px; color: #fff; font-weight: 700; background: linear-gradient(#555, #8b8b8b); clip-path: path("M0 0 C6 0 5 18 12 18 H50 C57 18 57 0 64 0 Z"); }
.lay .p { width: 24px; height: 17px; margin-left: 6px; clip-path: none; border-radius: 8px 2px 10px 2px; display: flex; align-items: center; justify-content: center; background: #555; }
.sb { display: flex; gap: 1px; padding-right: 1px; }
.sb > div { height: 27px; display: flex; align-items: center; justify-content: center; border: 1px solid #8a8a8a; background: #4a4a4a; }
.sb > .join { margin-right: -2px; }
.sb .mt { color: #fff; letter-spacing: -0.300px; padding-bottom: 1px; }
.one { margin-left: 8px; letter-spacing: -0.600px; }
.glow { filter: drop-shadow(0 0 2px #0b4fa0); }
```
